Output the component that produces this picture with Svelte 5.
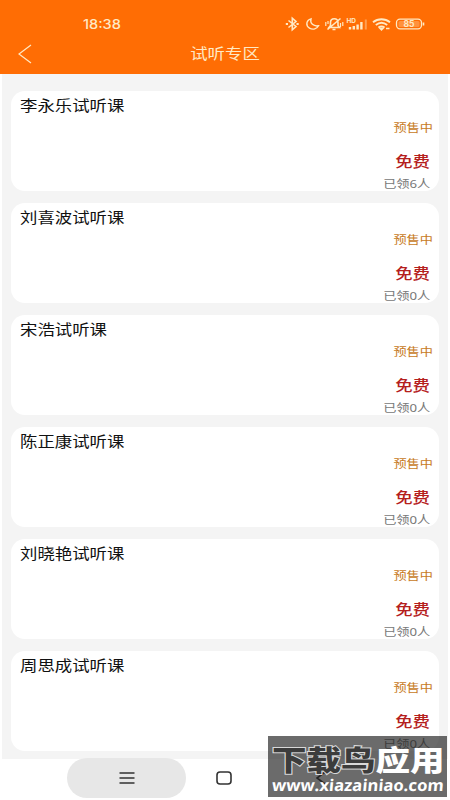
<script lang="ts">
  const courses = [
    { title: "李永乐试听课", taken: 6 },
    { title: "刘喜波试听课", taken: 0 },
    { title: "宋浩试听课", taken: 0 },
    { title: "陈正康试听课", taken: 0 },
    { title: "刘晓艳试听课", taken: 0 },
    { title: "周思成试听课", taken: 0 },
  ];
</script>

<div class="screen">
  <header>
    <div class="status-bar">
      <span class="time">18:38</span>
      <svg class="status-icons" viewBox="0 0 142 20" fill="none" stroke="currentColor" stroke-width="1.6">
        <!-- bluetooth -->
        <path d="M3.500 6.500l7.500 6-3.700 3.300V4.200l3.700 3.300-7.500 6" />
        <path d="M0.800 10h2.200M11.500 10h2.200" stroke-width="2" />
        <!-- do not disturb -->
        <path d="M26 4.800c-5 1.500-5.500 7-1.500 9.300 3.500 2 7.500 0.800 9-2.300-5 0.800-8.800-2.500-7.500-7z" stroke-width="1.400" />
        <!-- muted bell -->
        <path d="M44 13.500h10.500l-1.500-2v-3c0-5-7.500-5-7.500 0v3zM47.500 15.500h3M42.500 15.500l13-11" />
        <path d="M40.800 8v4M43 7v3M57.800 8v4M55.500 9v4" stroke-width="1.200" />
        <!-- signal -->
        <path d="M65 13v2.500M68.800 12v3.500M72.600 10.500v5M76.400 8v7.500" stroke-width="2.400" />
        <path d="M80.800 5.500v10" stroke-width="2" opacity="0.4" />
        <!-- wifi -->
        <path d="M88 8.200c5-4 12-4 17 0M90.800 11c3.500-2.800 8-2.800 11.400 0M93.500 13.500c2-1.500 4-1.500 6 0" stroke-width="1.900" />
        <path d="M95 14.200h3l-1.500 1.600zM101 14.500h3.500" />
        <!-- battery -->
        <rect x="111.500" y="5.200" width="25" height="9.600" rx="3.500" stroke-width="1.300" />
        <rect x="113.500" y="7" width="21" height="6" rx="1.500" fill="currentColor" stroke="none" opacity="0.3" />
        <path d="M138.500 8.500v3" />
        <text class="hd" x="61.500" y="8.500">HD</text>
        <text class="charge" x="118.500" y="13">85</text>
      </svg>
    </div>
    <div class="title-bar">
      <svg class="back" viewBox="0 0 14 20" fill="none" stroke="currentColor" stroke-width="1.2">
        <path d="M13 1L1 10l12 9" />
      </svg>
      <h1>试听专区</h1>
    </div>
  </header>

  <main>
    {#each courses as course}
      <article class="card">
        <h2>{course.title}</h2>
        <span class="presale">预售中</span>
        <strong>免费</strong>
        <span class="taken">已领{course.taken}人</span>
      </article>
    {/each}
  </main>

  <nav>
    <div class="menu-pill">
      <svg viewBox="0 0 16 12" stroke="currentColor" stroke-width="1.5">
        <path d="M0.500 1h15M0.500 6h15M0.500 11h15" />
      </svg>
    </div>
    <svg class="home" viewBox="0 0 16 14" fill="none" stroke="currentColor" stroke-width="1.600">
      <rect x="1" y="1" width="14" height="12" rx="3" />
    </svg>
    <svg class="nav-back" viewBox="0 0 10 14" fill="none" stroke="currentColor" stroke-width="1.600">
      <path d="M9 1L1 7l8 6" />
    </svg>
  </nav>

  <div class="watermark">
    <div class="brand"><span class="dark">下载鸟</span><span>应用</span></div>
    <div class="site">www.xiazainiao.com</div>
  </div>
</div>

<style>
  :global(body) {
    margin: 0;
  }

  .screen {
    position: relative;
    display: flex;
    flex-direction: column;
    width: 450px;
    height: 800px;
    overflow: hidden;
    background: #fff;
    font-family: "Noto Sans", "Noto Sans CJK SC", sans-serif;
  }

  header {
    box-sizing: border-box;
    flex: none;
    height: 73.5px;
    padding-top: 14px;
    background: #ff6d04;
    color: #ffe9c4;
  }

  .status-bar {
    display: flex;
    justify-content: space-between;
    height: 20px;
    padding: 0 23px 0 83px;
  }

  .time {
    font: 500 13px/20px "Inter", sans-serif;
    transform: scaleX(1.12);
    transform-origin: left;
  }

  .status-icons {
    width: 142px;
    height: 20px;
  }

  .status-icons text {
    fill: currentColor;
    stroke: none;
    font-family: "Inter", sans-serif;
    font-weight: 700;
  }

  .hd {
    font-size: 6.5px;
  }

  .charge {
    font-size: 8.5px;
  }

  .title-bar {
    display: grid;
    grid-template-columns: 32px 1fr 32px;
    align-items: center;
    height: 39px;
  }

  .back {
    width: 14px;
    height: 20px;
    margin-left: 18px;
  }

  h1 {
    margin: -2px 0 0;
    font-size: 14.5px;
    font-weight: 400;
    line-height: 20px;
    text-align: center;
    transform: scaleX(1.2);
  }

  main {
    box-sizing: border-box;
    display: flex;
    flex: none;
    flex-direction: column;
    gap: 12px;
    height: 685px;
    margin: 0 2px;
    padding: 17.5px 9px 0;
    background: #f4f4f4;
  }

  .card {
    box-sizing: border-box;
    display: flex;
    flex: none;
    flex-direction: column;
    align-items: flex-end;
    height: 100px;
    padding: 4px 9px 0;
    border-radius: 14px;
    background: #fff;
  }

  h2 {
    align-self: flex-start;
    margin: 0;
    color: #111;
    font-size: 14.5px;
    font-weight: 400;
    line-height: 20px;
    transform: scaleX(1.2);
    transform-origin: left;
  }

  .presale,
  .taken,
  strong {
    transform: scaleX(1.2);
    transform-origin: right;
  }

  .presale {
    margin: 5px -3px 0 0;
    color: #c77a1d;
    font-size: 11px;
    line-height: 16px;
  }

  strong {
    margin-top: 15px;
    color: #b5201d;
    font-size: 14.5px;
    font-weight: 500;
    line-height: 20px;
  }

  .taken {
    margin-top: 5px;
    color: #777;
    font-size: 11px;
    line-height: 16px;
  }

  nav {
    display: flex;
    flex: 1;
    align-items: center;
    padding-left: 67px;
    color: #333;
  }

  .menu-pill {
    display: flex;
    align-items: center;
    justify-content: center;
    width: 119px;
    height: 40px;
    margin-top: -2px;
    border-radius: 20px;
    background: #e7e7e7;
  }

  .menu-pill svg {
    width: 16px;
    height: 12px;
  }

  .home {
    width: 16px;
    height: 14px;
    margin: -2px 0 0 30px;
  }

  .nav-back {
    width: 10px;
    height: 14px;
    margin: -2px 0 0 84px;
  }

  .watermark {
    position: absolute;
    top: 736px;
    left: 268px;
    box-sizing: border-box;
    width: 179px;
    height: 61px;
    padding-left: 4px;
    background: rgba(30, 30, 30, 0.66);
    color: #fff;
    white-space: nowrap;
  }

  .brand {
    height: 40px;
    font: 900 28.5px/45px "Noto Sans CJK SC", sans-serif;
    transform: scaleX(1.21);
    transform-origin: left;
  }

  .dark {
    color: #3c3c3c;
    -webkit-text-stroke: 2px #d8d8d8;
    paint-order: stroke fill;
  }

  .site {
    font: 700 16px/19px "Open Sans", sans-serif;
    transform: scaleX(1.04) skewX(-5deg);
    transform-origin: left;
  }
</style>
